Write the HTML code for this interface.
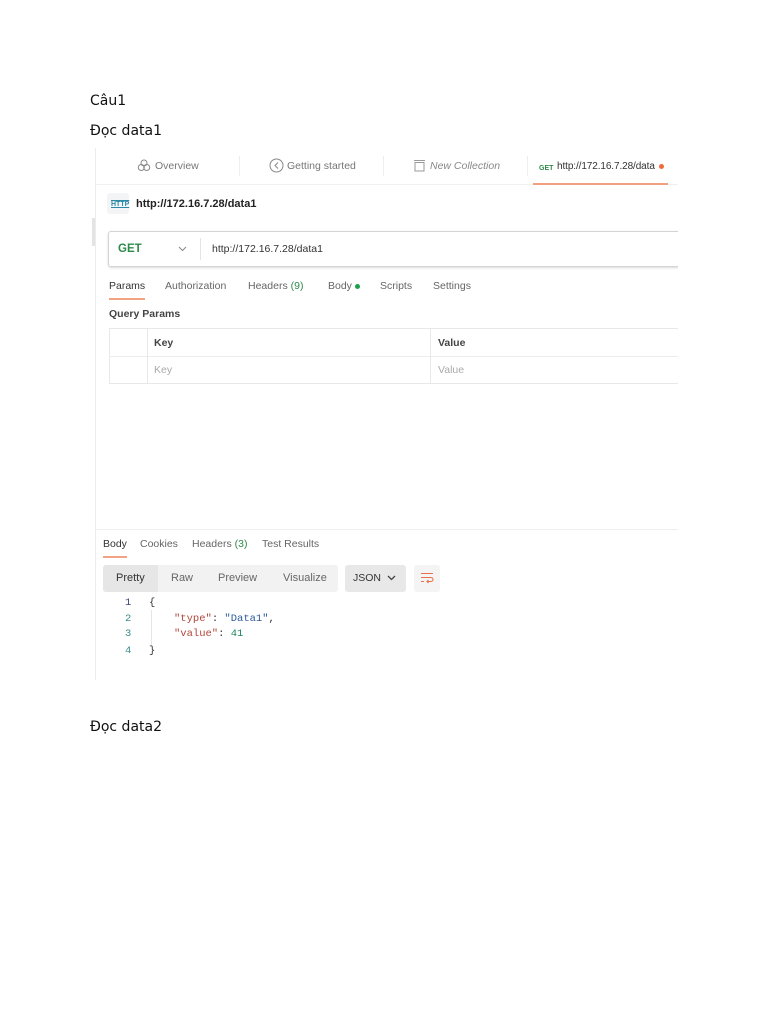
<!DOCTYPE html>
<html><head><meta charset="utf-8"><style>
*{margin:0;padding:0;box-sizing:border-box}
body{width:768px;height:1024px;background:#fff;position:relative;overflow:hidden;font-family:"Liberation Sans",sans-serif;}
.doc{position:absolute;left:90px;font-family:"DejaVu Sans",sans-serif;font-size:14px;color:#111;line-height:16px}
.a{position:absolute;white-space:nowrap;font-size:11px;color:#555;line-height:13px}
.ln{position:absolute;background:#e6e6e6}
.code{font-family:"Liberation Mono",monospace;font-size:10.5px}
#clip{position:absolute;left:0;top:0;width:678px;height:1024px;overflow:hidden}
</style></head><body>
<div class="doc" style="top:93px">Câu1</div>
<div class="doc" style="top:123px">Đọc data1</div>
<div class="doc" style="top:719px">Đọc data2</div>
<div id="clip">
<div class="ln" style="left:95px;top:148px;width:1px;height:532px;background:#ececec"></div>
<div class="ln" style="left:92px;top:218px;width:3px;height:28px;background:#e4e4e4"></div>

<svg style="position:absolute;left:137px;top:159px" width="14" height="13" viewBox="0 0 14 13"><g fill="none" stroke="#888" stroke-width="1"><circle cx="7" cy="4" r="3"/><circle cx="4.3" cy="8.5" r="3"/><circle cx="9.7" cy="8.5" r="3"/></g></svg>
<div class="a" style="left:155px;top:160px;color:#777;font-size:10.5px">Overview</div>
<div class="ln" style="left:239px;top:156px;width:1px;height:20px;background:#eee"></div>
<svg style="position:absolute;left:269px;top:158px" width="15" height="15" viewBox="0 0 15 15"><circle cx="7.5" cy="7.5" r="6.5" fill="none" stroke="#888"/><path d="M9 4.5L6 7.5L9 10.5" fill="none" stroke="#888"/></svg>
<div class="a" style="left:287px;top:160px;color:#777;font-size:10.5px">Getting started</div>
<div class="ln" style="left:383px;top:156px;width:1px;height:20px;background:#eee"></div>
<svg style="position:absolute;left:413px;top:159px" width="13" height="13" viewBox="0 0 13 13"><path d="M1 1.5H12M2 3.5H11V12H2Z" fill="none" stroke="#999"/></svg>
<div class="a" style="left:430px;top:160px;color:#888;font-style:italic;font-size:10.5px">New Collection</div>
<div class="ln" style="left:527px;top:156px;width:1px;height:20px;background:#eee"></div>
<div class="a" style="left:539px;top:162px;font-size:7px;font-weight:bold;color:#2e8a4a">GET</div>
<div class="a" style="left:557px;top:160px;color:#333;font-size:10px;letter-spacing:-0.1px">http://172.16.7.28/data</div>
<div style="position:absolute;left:659px;top:164px;width:5px;height:5px;border-radius:50%;background:#f26b3a"></div>
<div class="ln" style="left:96px;top:184px;width:582px;height:1px;background:#f0f0f0"></div>
<div class="ln" style="left:533px;top:183px;width:135px;height:2px;background:#f0a080"></div>

<div style="position:absolute;left:107px;top:193px;width:22px;height:21px;background:#f2f4f5;border-radius:3px"></div>
<div class="a" style="left:111px;top:198px;font-size:7px;color:#2a8aa6;font-weight:bold;text-decoration:underline overline">HTTP</div>
<div class="a" style="left:136px;top:198px;font-weight:bold;color:#222;font-size:11px">http://172.16.7.28/data1</div>

<div style="position:absolute;left:108px;top:231px;width:590px;height:36px;border:1px solid #d4d4d4;border-radius:3px;box-shadow:0 1px 2px rgba(0,0,0,.15)"></div>
<div class="a" style="left:118px;top:243px;font-weight:bold;color:#2e8a4a;font-size:11.5px">GET</div>
<svg style="position:absolute;left:178px;top:246px" width="9" height="6" viewBox="0 0 9 6"><path d="M1 1L4.5 4.5L8 1" fill="none" stroke="#888"/></svg>
<div class="ln" style="left:200px;top:238px;width:1px;height:22px;background:#e4e4e4"></div>
<div class="a" style="left:212px;top:243px;color:#333;font-size:10.5px">http://172.16.7.28/data1</div>

<div class="a" style="left:109px;top:280px;color:#333;font-size:10.5px">Params</div>
<div class="ln" style="left:109px;top:298px;width:36px;height:2px;background:#f3a283"></div>
<div class="a" style="left:165px;top:280px;color:#666;font-size:10.5px">Authorization</div>
<div class="a" style="left:248px;top:280px;color:#666;font-size:10.5px">Headers <span style="color:#2e8a4a">(9)</span></div>
<div class="a" style="left:328px;top:280px;color:#666;font-size:10.5px">Body</div>
<div style="position:absolute;left:355px;top:284px;width:5px;height:5px;border-radius:50%;background:#1aa34a"></div>
<div class="a" style="left:380px;top:280px;color:#666;font-size:10.5px">Scripts</div>
<div class="a" style="left:433px;top:280px;color:#666;font-size:10.5px">Settings</div>
<div class="a" style="left:109px;top:308px;color:#444;font-weight:bold;font-size:10.5px">Query Params</div>

<div style="position:absolute;left:109px;top:328px;width:590px;height:56px;border:1px solid #e8e8e8"></div>
<div class="ln" style="left:109px;top:356px;width:570px;height:1px;background:#ececec"></div>
<div class="ln" style="left:147px;top:328px;width:1px;height:56px;background:#e8e8e8"></div>
<div class="ln" style="left:430px;top:328px;width:1px;height:56px;background:#e8e8e8"></div>
<div class="a" style="left:154px;top:337px;color:#444;font-weight:bold;font-size:10.5px">Key</div>
<div class="a" style="left:438px;top:337px;color:#444;font-weight:bold;font-size:10.5px">Value</div>
<div class="a" style="left:154px;top:364px;color:#aaa;font-size:10.5px">Key</div>
<div class="a" style="left:438px;top:364px;color:#aaa;font-size:10.5px">Value</div>

<div class="ln" style="left:96px;top:529px;width:582px;height:1px;background:#eee"></div>
<div class="a" style="left:103px;top:538px;color:#333;font-size:10.5px">Body</div>
<div class="ln" style="left:103px;top:556px;width:24px;height:2px;background:#f3a283"></div>
<div class="a" style="left:140px;top:538px;color:#666;font-size:10.5px">Cookies</div>
<div class="a" style="left:192px;top:538px;color:#666;font-size:10.5px">Headers <span style="color:#2e8a4a">(3)</span></div>
<div class="a" style="left:262px;top:538px;color:#666;font-size:10.5px">Test Results</div>

<div style="position:absolute;left:103px;top:565px;width:235px;height:27px;background:#f2f2f2;border-radius:3px"></div>
<div style="position:absolute;left:103px;top:565px;width:55px;height:27px;background:#e6e6e6;border-radius:3px 0 0 3px"></div>
<div class="a" style="left:116px;top:572px;color:#333">Pretty</div>
<div class="a" style="left:171px;top:572px;color:#666">Raw</div>
<div class="a" style="left:218px;top:572px;color:#666">Preview</div>
<div class="a" style="left:283px;top:572px;color:#666">Visualize</div>
<div style="position:absolute;left:345px;top:565px;width:61px;height:27px;background:#e8e8e8;border-radius:3px"></div>
<div class="a" style="left:353px;top:572px;color:#333;font-size:10.5px">JSON</div>
<svg style="position:absolute;left:387px;top:575px" width="9" height="6" viewBox="0 0 9 6"><path d="M1 1L4.5 4.5L8 1" fill="none" stroke="#444" stroke-width="1.3"/></svg>
<div style="position:absolute;left:414px;top:565px;width:26px;height:27px;background:#f4f4f4;border-radius:3px"></div>
<svg style="position:absolute;left:420px;top:572px" width="14" height="12" viewBox="0 0 14 12"><path d="M1 1.5H13M1 5.5H11a2 2 0 0 1 0 4H7M8.5 8L7 9.5L8.5 11M1 9.5H4" fill="none" stroke="#e8704a" stroke-width="1.1"/></svg>

<div class="a code" style="left:125px;top:597px;color:#3a4a7a">1</div>
<div class="a code" style="left:125px;top:613px;color:#3a8a8a">2</div>
<div class="a code" style="left:125px;top:628px;color:#3a8a8a">3</div>
<div class="a code" style="left:125px;top:645px;color:#3a8a8a">4</div>
<div class="ln" style="left:151px;top:610px;width:1px;height:36px;background:#e6e6e6"></div>
<div class="a code" style="left:149px;top:597px;color:#333">{</div>
<div class="a code" style="left:174px;top:613px;color:#333"><span style="color:#b2453a">"type"</span>: <span style="color:#2a5a9a">"Data1"</span>,</div>
<div class="a code" style="left:174px;top:628px;color:#333"><span style="color:#b2453a">"value"</span>: <span style="color:#1a8a5a">41</span></div>
<div class="a code" style="left:149px;top:645px;color:#333">}</div>
</div>
</body></html>
